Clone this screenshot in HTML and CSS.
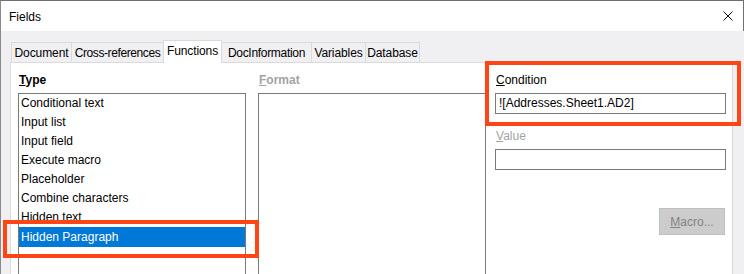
FILE: index.html
```html
<!DOCTYPE html>
<html lang="en">
<head>
    <meta charset="UTF-8">
    <title>Fields</title>
    <link rel="stylesheet" href="styles.css">
</head>
<body>

    <div class="window">
        <div class="titlebar">
            <span class="title">Fields</span>
            <svg class="close" width="10" height="10" viewBox="0 0 10 10">
                <path d="M0.5 0.5 L9.5 9.5 M9.5 0.5 L0.5 9.5" stroke="#111" stroke-width="1" fill="none"/>
            </svg>
        </div>

        <div class="dialog">
            <div class="tabs">
                <div class="tab tab-document">Document</div>
                <div class="tab tab-crossref">Cross-references</div>
                <div class="tab tab-functions active">Functions</div>
                <div class="tab tab-docinfo">DocInformation</div>
                <div class="tab tab-variables">Variables</div>
                <div class="tab tab-database">Database</div>
            </div>

            <div class="panel">
                <div class="col col-type">
                    <div class="label strong"><u>T</u>ype</div>
                    <div class="listbox">
                        <div class="item">Conditional text</div>
                        <div class="item">Input list</div>
                        <div class="item">Input field</div>
                        <div class="item">Execute macro</div>
                        <div class="item">Placeholder</div>
                        <div class="item">Combine characters</div>
                        <div class="item">Hidden text</div>
                        <div class="item selected">Hidden Paragraph</div>
                    </div>
                </div>

                <div class="col col-format">
                    <div class="label strong disabled"><u>F</u>ormat</div>
                    <div class="listbox"></div>
                </div>

                <div class="col col-side">
                    <div class="label"><u>C</u>ondition</div>
                    <div class="field">![Addresses.Sheet1.AD2]</div>
                    <div class="label disabled value-label"><u>V</u>alue</div>
                    <div class="field"></div>
                    <div class="actions">
                        <button class="btn" disabled><u>M</u>acro...</button>
                    </div>
                </div>
            </div>
        </div>

        <div class="mark mark-type"></div>
        <div class="mark mark-condition"></div>
    </div>

</body>
</html>
```

FILE: styles.css
```css
body {
    margin: 0;
    padding: 0;
    font-family: "Segoe UI", "Liberation Sans", Arial, sans-serif;
    font-size: 12px;
    color: #000;
    background-color: #f0eff1;
}
.window {
    position: relative;
    width: 744px;
    height: 274px;
    overflow: hidden;
    box-sizing: border-box;
    border-left: 1px solid #8a8a8a;
    border-top: 1px solid #6f6f6f;
    background-color: #f0eff1;
}
.titlebar {
    height: 30px;
    background-color: #fff;
    display: flex;
    align-items: center;
    justify-content: space-between;
    padding: 0 10px 0 8px;
    border-right: 1px solid #6f6f6f;
}
.title {
    padding-top: 1px;
}
.dialog {
    padding: 8px 0 0 9px;
}
.tabs {
    display: flex;
    align-items: flex-end;
    height: 23px;
    padding-left: 1px;
}
.tab {
    flex: none;
    height: 20px;
    line-height: 20px;
    text-align: center;
    white-space: nowrap;
    letter-spacing: -0.1px;
    box-sizing: border-box;
    border: 1px solid #dadada;
    border-bottom: none;
    border-right: none;
    background-color: #f0eff1;
}
.tab-document { width: 60px; }
.tab-crossref { width: 92px; letter-spacing: -0.4px; }
.tab-functions { width: 59px; }
.tab-docinfo { width: 89px; letter-spacing: -0.3px; }
.tab-variables { width: 54px; }
.tab-database { width: 55px; border-right: 1px solid #dadada; }
.tab.active {
    height: 23px;
    line-height: 21px;
    background-color: #fff;
    border-right: 1px solid #dadada;
    margin-bottom: -1px;
    position: relative;
}
.tab.active + .tab {
    border-left: none;
}
.panel {
    width: 723px;
    height: 220px;
    box-sizing: border-box;
    background-color: #fff;
    border: 1px solid #dadada;
    display: flex;
    gap: 12px;
    padding: 10px 6px 0 7px;
}
.col {
    display: flex;
    flex-direction: column;
}
.col-type, .col-format {
    width: 228px;
}
.col-side {
    width: 231px;
    margin-left: -3px;
}
.label {
    line-height: 15px;
    height: 15px;
    margin-bottom: 5px;
    padding-left: 1px;
}
.strong {
    font-weight: bold;
}
.disabled {
    color: #a3a3a3;
}
.listbox {
    height: 200px;
    box-sizing: border-box;
    border: 1px solid #7a7a7a;
    background-color: #fff;
}
.item {
    height: 19px;
    line-height: 19px;
    padding-left: 2px;
}
.item.selected {
    background-color: #0078d7;
    color: #fff;
    height: 20px;
    line-height: 20px;
}
.field {
    height: 21px;
    line-height: 19px;
    box-sizing: border-box;
    border: 1px solid #7a7a7a;
    padding-left: 3px;
}
.value-label {
    margin-top: 15px;
}
.actions {
    display: flex;
    justify-content: flex-end;
    margin-top: 38px;
    padding-right: 1px;
}
.btn {
    width: 66px;
    height: 27px;
    font-family: inherit;
    font-size: 12px;
    color: #838383;
    background-color: #cccccc;
    border: 1px solid #bfbfbf;
    padding: 0;
}
.mark {
    position: absolute;
    box-sizing: border-box;
    border: 4px solid #ff4416;
}
.mark-type {
    left: 2px;
    top: 219px;
    width: 256px;
    height: 38px;
}
.mark-condition {
    left: 484px;
    top: 60px;
    width: 256px;
    height: 65px;
}
```
